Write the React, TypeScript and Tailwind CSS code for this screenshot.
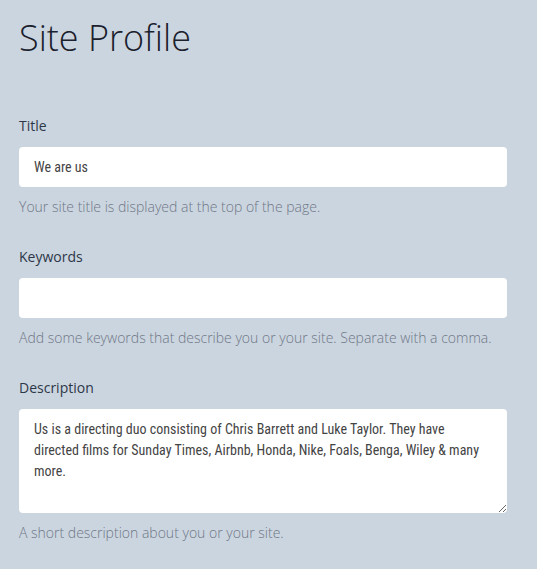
import React from "react";

const inputFont = {
  fontFamily: '"Roboto Condensed", "Liberation Sans Narrow", Roboto, sans-serif',
};

export default function App() {
  return (
    <div className="min-h-[569px] w-full bg-[#cbd5e0] px-[19px] pt-[14px] pb-10 font-['Open_Sans',sans-serif] text-[#2d3748]">
      <h1 className="text-[36px] font-light leading-[48px] text-[#1a202c]">Site Profile</h1>

      <div className="mt-[54px] flex flex-col">
        <label className="text-[14px] leading-[20px] text-[#2d3748]">Title</label>
        <input
          className="mt-[11px] h-[40px] w-[488px] rounded-[4px] bg-white px-[15px] text-[14px] font-normal text-[#444444] outline-none"
          defaultValue="We are us"
          style={inputFont}
        />
        <p className="mt-[10px] text-[14px] font-light leading-[20px] text-[#6f7785]">
          Your site title is displayed at the top of the page.
        </p>
      </div>

      <div className="mt-[30px] flex flex-col">
        <label className="text-[14px] leading-[20px] text-[#2d3748]">Keywords</label>
        <input
          className="mt-[11px] h-[40px] w-[488px] rounded-[4px] bg-white px-[15px] text-[14px] font-normal text-[#444444] outline-none"
          defaultValue=""
          style={inputFont}
        />
        <p className="mt-[10px] text-[14px] font-light leading-[20px] text-[#6f7785]">
          Add some keywords that describe you or your site. Separate with a comma.
        </p>
      </div>

      <div className="mt-[30px] flex flex-col">
        <label className="text-[14px] leading-[20px] text-[#2d3748]">Description</label>
        <textarea
          className="mt-[11px] h-[104px] w-[488px] rounded-[4px] bg-white px-[15px] py-[10px] text-[14px] font-normal leading-[21px] text-[#444444] outline-none"
          defaultValue="Us is a directing duo consisting of Chris Barrett and Luke Taylor. They have directed films for Sunday Times, Airbnb, Honda, Nike, Foals, Benga, Wiley & many more."
          style={inputFont}
        />
        <p className="mt-[10px] text-[14px] font-light leading-[20px] text-[#6f7785]">
          A short description about you or your site.
        </p>
      </div>
    </div>
  );
}
